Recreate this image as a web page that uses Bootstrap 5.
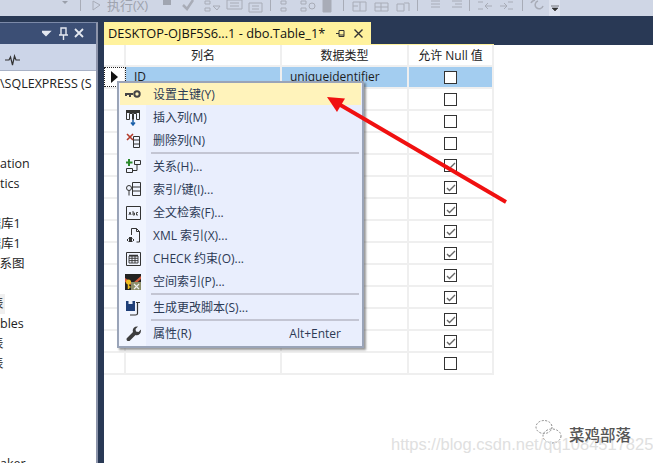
<!DOCTYPE html>
<html lang="zh"><head><meta charset="utf-8">
<link href="https://cdn.jsdelivr.net/npm/bootstrap@5.3.0/dist/css/bootstrap.min.css" rel="stylesheet">
<style>
html,body{margin:0;width:653px;height:463px;overflow:hidden;background:#fff}
body{font-family:"Open Sans","Noto Sans CJK SC",sans-serif;font-size:12px;color:#1e1e1e;position:relative}
.shot{width:653px;height:463px;overflow:hidden}
.tb-bar{height:16px;background:#cfd6e5;position:relative;overflow:hidden}
.tb-bar svg{display:block}
.tb-run{position:absolute;left:107px;top:-4px;font-size:13px;line-height:18px;color:#9ea3ae;white-space:nowrap}
.ide{width:494px;height:447px;background:#293955}
.navy-right{height:29px;background:#293955;width:159px}
.sidepanel{width:98px;height:441px;margin-top:6px;background:#fff;border-right:2px solid #8d95ab;border-top:1px solid #7c8aa8;flex:none}
.side-title{height:22px;background:#3c4f75;color:#dfe4ee}
.side-tools{height:27px;background:#ccd5e8;border-bottom:1px solid #a9b2c6;padding:6px 0 0 5px}
.tree-rows{font-size:12.5px;color:#222;line-height:20px;white-space:nowrap;overflow:hidden;padding-top:3px}
.tree-row{height:20px}
.hover-row{background:#f0f0f0;width:5px;overflow:hidden}
.clip-a{margin-left:-24px}
.clip-b{margin-left:-13px}
.clip-c{margin-left:-9px}
.docarea{width:390px;margin-left:6px}
.tab-row{height:22px;margin-top:6px}
.doc-tab{width:267px;height:22px;background:#fff29d;color:#111;font-size:12.8px;padding-left:4px;line-height:22px}
.tab-tools{margin-left:auto;margin-right:8px;gap:9px}
.tab-line{height:1px;background:#fff29d}
.sheet{background:#fff;height:418px}
.grow-row{height:22px;border-bottom:2px solid #efefef}
.cell-sel{width:22px;border-right:2px solid #efefef;flex:none}
.cell-name{width:156px;border-right:2px solid #efefef;flex:none;padding-left:8px;line-height:20px}
.cell-type{width:127px;border-right:2px solid #efefef;flex:none;padding-left:8px;line-height:20px;overflow:hidden;white-space:nowrap}
.cell-null{width:85px;flex:none;border-right:2px solid #efefef}
.head-row .cell-name,.head-row .cell-type,.head-row .cell-null{text-align:center;padding:0;line-height:22px;color:#222}
.on-row .cell-name,.on-row .cell-type,.on-row .cell-null{background:#a3cdf0}
.on-row .cell-sel{outline:1px dotted #222;outline-offset:-1px;background:#fff}
.cbx{width:13px;height:13px;border:1px solid #333;background:#fff;display:block}
.cell-null svg{display:block}
.popup{position:absolute;left:117px;top:81px;width:247px;height:267px;background:linear-gradient(90deg,#f1f5ff 0,#f1f5ff 27px,#e9eefd 27px);border:2px solid #9aa4b8;box-shadow:2px 2px 2px rgba(70,70,70,.55);padding:0 1px;color:#333}
.pop-item{height:23px;line-height:22px;flex:none}
.pop-item.hot{background:#fff3bb;height:22px}
.pop-item.hot .pop-text{padding-top:1px}
.pop-ico{width:26px;flex:none}
.pop-ico svg{display:block}
.pop-text{margin-left:7px;font-size:12px;color:#2c3a55;white-space:nowrap}
.pop-key{margin-left:auto;margin-right:20px;font-size:12px;color:#2c3a55}
.pop-sep{height:2px;background:#c3c5d3;margin:0 2px 0 31px;flex:none}
.popgap{height:1px;flex:none}
.overlay-svg{position:absolute;left:0;top:0;pointer-events:none}
.mark-a{position:absolute;left:391px;top:435px;font:16.5px "Liberation Sans",sans-serif;color:#e0e0e0;white-space:nowrap}
.mark-b{position:absolute;left:569px;top:424px;font-size:15.5px;color:#555;font-weight:500;white-space:nowrap}
</style></head><body>
<div class="shot">
 <div class="tb-bar">
  <svg width="653" height="16" viewBox="0 0 653 16" fill="none" stroke="#a8acb7">
   <path d="M62 1l3 3 3-3z" fill="#9a9faa" stroke="none"/>
   <path d="M80.500 0v11M93 1l7 4-7 5z"/>
   <path d="M163 0h8v5h-8z" fill="#a0a5b0" stroke="none"/>
   <path d="M183 5l4 4 6-9" stroke-width="2.500"/>
   <path d="M205 1h5v3h-5zM205 8h5v3h-5zM213 6h7l-3 4z"/>
   <path d="M227 0h15v9h-15zM230 3h9M230 6h9"/>
   <path d="M249 3h13v9h-13zM252 6h7M252 9h7"/>
   <path d="M270.500 0v11M281 1h5v3h-5zM281 8h5v3h-5z"/>
   <path d="M301 1h5v3h-5zM301 8h5v3h-5zM309 6a3 3 0 1 0 6 0a3 3 0 1 0-6 0"/>
   <path d="M323 0h8v12h-8z" fill="#a8acb7"/>
   <path d="M343.500 0v11M353 2h13v9h-13zM353 6h5M360 2v9"/>
   <path d="M375 3h13v8h-13zM381 3v8M375 7h13"/>
   <path d="M397 4h7v7h-7zM404 3h5v8"/>
   <path d="M417.500 0v11M431 1h9M431 4h9M431 7h9"/>
   <path d="M452 1h10M455 4h7M452 7h10"/>
   <path d="M469.500 0v11M478 2h5M478 9h5M486 6h6M488 3l-3 3 3 3"/>
   <path d="M500 6h6M504 3l3 3-3 3M508 2h5M508 9h5"/>
   <path d="M522.500 0v11"/>
   <path d="M531 3a6 6 0 0 1 4-3M538 1a4 4 0 1 0 5 5" stroke-width="1.500"/>
   <rect x="549" y="0" width="11" height="16" fill="#dde2ee" stroke="none"/>
   <path d="M551 6h8M552 8h6l-3 3z" fill="#333" stroke="#333" stroke-width=".6"/>
  </svg>
  <span class="tb-run">执行(X)</span>
 </div>
 <div class="d-flex">
  <div class="ide d-flex">
   <div class="sidepanel d-flex flex-column">
    <div class="side-title d-flex align-items-center justify-content-end">
     <svg width="50" height="14" viewBox="0 0 50 14" fill="none" stroke="#e4e8f0" stroke-width="1.400"><path d="M0 4.500h8l-4 4z" fill="#e4e8f0"/><path d="M19 1h5v7h-5zM17 8h9M21.500 8v5M24 2v6"/><path d="M33 2l8 8M41 2l-8 8" stroke-width="1.800"/></svg>
     <span class="ms-1"></span>
    </div>
    <div class="side-tools">
     <svg width="15" height="12" viewBox="0 0 15 12" fill="none" stroke="#333" stroke-width="1.200"><path d="M0 6h4l1.500-3 2 8 2-9 1.500 4h4"/></svg>
    </div>
    <div class="tree-rows">
     <div class="tree-row">\SQLEXPRESS (S</div>
     <div class="tree-row"></div><div class="tree-row"></div><div class="tree-row"></div>
     <div class="tree-row">ation</div>
     <div class="tree-row">tics</div>
     <div class="tree-row"></div>
     <div class="tree-row clip-a">数据库1</div>
     <div class="tree-row clip-a">数据库1</div>
     <div class="tree-row clip-b">关系图</div>
     <div class="tree-row"></div>
     <div class="tree-row hover-row"><span class="clip-c d-block">表</span></div>
     <div class="tree-row">bles</div>
     <div class="tree-row clip-c">表</div>
     <div class="tree-row clip-c">表</div>
     <div class="tree-row"></div><div class="tree-row"></div><div class="tree-row"></div><div class="tree-row"></div>
     <div class="tree-row">aker</div>
    </div>
   </div>
   <div class="docarea d-flex flex-column">
    <div class="tab-row d-flex">
     <div class="doc-tab d-flex align-items-center">
      <span>DESKTOP-OJBF5S6...1 - dbo.Table_1*</span>
      <span class="tab-tools d-flex align-items-center">
       <svg width="9" height="9" viewBox="0 0 9 9" fill="none" stroke="#333"><path d="M0 4.500h3M3 1.500v6h5v-6zM3 6h5"/></svg>
       <svg width="9" height="9" viewBox="0 0 9 9" fill="none" stroke="#333" stroke-width="1.400"><path d="M.5.500l8 8M8.500.500l-8 8"/></svg>
      </span>
     </div>
    </div>
    <div class="tab-line"></div>
    <div class="sheet">
     <div class="grow-row head-row d-flex"><div class="cell-sel"></div><div class="cell-name">列名</div><div class="cell-type">数据类型</div><div class="cell-null">允许 Null 值</div></div>
     <div class="grow-row on-row d-flex"><div class="cell-sel d-flex align-items-center justify-content-center"><svg width="7" height="12" viewBox="0 0 7 12"><path d="M0 0l7 6-7 6z" fill="#111"/></svg></div><div class="cell-name">ID</div><div class="cell-type">uniqueidentifier</div><div class="cell-null d-flex align-items-center justify-content-center"><span class="cbx"></span></div></div>
     <div id="rows"></div>
    </div>
   </div>
  </div>
  <div class="navy-right"></div>
 </div>
</div>
<div class="popup d-flex flex-column">
 <div class="pop-item hot d-flex align-items-center"><span class="pop-ico d-flex justify-content-center"><svg width="16" height="8" viewBox="0 0 16 8"><path d="M0 3h8v2H6v2H4V5H2v1H0z" fill="#444"/><circle cx="12" cy="4" r="2.700" fill="none" stroke="#444" stroke-width="2"/></svg></span><span class="pop-text">设置主键(Y)</span></div>
 <div class="popgap"></div>
 <div class="pop-item d-flex align-items-center"><span class="pop-ico d-flex justify-content-center"><svg width="15" height="16" viewBox="0 0 15 16" fill="none" stroke="#333"><path d="M.5 1.500h13M.5.500h13v9h-3v-6h-3v6h-1v-6h-3v6h-3z"/><path d="M0 0h14v3H0z" fill="#333" stroke="none"/><path d="M7 10v4M5 12.500l2 2.500 2-2.500" stroke="#1a5fa8" stroke-width="1.500"/></svg></span><span class="pop-text">插入列(M)</span></div>
 <div class="pop-item d-flex align-items-center"><span class="pop-ico d-flex justify-content-center"><svg width="15" height="15" viewBox="0 0 15 15" fill="none" stroke="#333"><path d="M7.500 3.500h6v11h-6zM7.500 7h6M7.500 11h6"/><path d="M1 1l6 6M7 1l-6 6" stroke="#b23a2a" stroke-width="1.600"/></svg></span><span class="pop-text">删除列(N)</span></div>
 <div class="pop-sep"></div><div class="popgap"></div>
 <div class="pop-item d-flex align-items-center"><span class="pop-ico d-flex justify-content-center"><svg width="15" height="15" viewBox="0 0 15 15" fill="none" stroke="#333"><path d="M3 0v7M0 3.500h6.500" stroke="#2c8a2c" stroke-width="2"/><path d="M8.500 1.500h6v4h-6zM.5 9.500h6v4h-6zM11 5.500v6h-4.500"/></svg></span><span class="pop-text">关系(H)...</span></div>
 <div class="pop-item d-flex align-items-center"><span class="pop-ico d-flex justify-content-center"><svg width="15" height="15" viewBox="0 0 15 15" fill="none" stroke="#333"><path d="M6.500.500h8v13h-8zM6.500 5h8M6.500 9h8"/><circle cx="3" cy="6" r="2.500" fill="#f1f5ff"/><path d="M3 8.500v5"/></svg></span><span class="pop-text">索引/键(I)...</span></div>
 <div class="pop-item d-flex align-items-center"><span class="pop-ico d-flex justify-content-center"><svg width="15" height="14" viewBox="0 0 15 14" fill="none" stroke="#333"><path d="M.5.500h14v13h-14z"/><path d="M3 9l1-3 1 3M7 5v4h1.500v-2H7M12 6.500h-1.500v2.500H12" stroke-width=".9"/></svg></span><span class="pop-text">全文检索(F)...</span></div>
 <div class="pop-item d-flex align-items-center"><span class="pop-ico d-flex justify-content-center"><svg width="15" height="15" viewBox="0 0 15 15" fill="none" stroke="#333"><path d="M5.500 7V.500h5l3 3v10.500h-3M10.500.500v3h3"/><path d="M1 12l1.500-1.500M1 12l1.500 1.500M8 12l-1.500-1.500M8 12l-1.500 1.500"/><rect x="3.500" y="9.500" width="2" height="4" fill="#333"/></svg></span><span class="pop-text">XML 索引(X)...</span></div>
 <div class="pop-item d-flex align-items-center"><span class="pop-ico d-flex justify-content-center"><svg width="15" height="14" viewBox="0 0 15 14" fill="none" stroke="#333"><path d="M.5.500h14v13h-14z"/><path d="M3 4h9v7H3zM6 4v7M9 4v7M3 6.300h9M3 8.600h9" stroke-width=".9"/><path d="M3 3.500h9" stroke-width="1.500"/></svg></span><span class="pop-text">CHECK 约束(O)...</span></div>
 <div class="pop-item d-flex align-items-center"><span class="pop-ico d-flex justify-content-center"><svg width="16" height="16" viewBox="0 0 16 16"><rect width="16" height="16" fill="#222"/><path d="M0 4l8 5 8-7v3l-8 7-8-4z" fill="#d35a3a"/><path d="M6 8h10v8H6z" fill="#8d8f6a"/><path d="M9 10l5 5M14 10l-5 5" stroke="#eee" stroke-width="1.200"/><circle cx="3.500" cy="8" r="2.500" fill="#f0c020"/><path d="M3.500 10v5M3.500 13h2" stroke="#f0c020" stroke-width="1.500"/></svg></span><span class="pop-text">空间索引(P)...</span></div>
 <div class="pop-sep"></div><div class="popgap"></div>
 <div class="pop-item d-flex align-items-center"><span class="pop-ico d-flex justify-content-center"><svg width="15" height="16" viewBox="0 0 15 16" fill="none" stroke="#333"><path d="M0 1h9v10H0z" fill="#1f3f78" stroke="none"/><path d="M2.500 1h4v3h-4z" fill="#eaf0fb" stroke="none"/><path d="M10 2.500h4M11.500 2.500v11q0 1.500-2 1.500H4" stroke-width="1.200"/></svg></span><span class="pop-text">生成更改脚本(S)...</span></div>
 <div class="pop-sep"></div><div class="popgap"></div>
 <div class="pop-item d-flex align-items-center"><span class="pop-ico d-flex justify-content-center"><svg width="15" height="15" viewBox="0 0 15 15"><path d="M1 12l6-6c-1-3 1-6 5-5.500L9.500 3 10 5.500l2.500.500L15 3.500c.3 4-2.500 6.500-5.500 5.500l-6 6q-1.500 .8-2.500-.5t0-2.500z" fill="#3d3d3d"/></svg></span><span class="pop-text">属性(R)</span><span class="pop-key">Alt+Enter</span></div>
</div>
<svg class="overlay-svg" width="653" height="463" viewBox="0 0 653 463"><path d="M506 202L337 103" stroke="#f01010" stroke-width="3.800" fill="none"/><path d="M327 97l18 1.500-8 13.500z" fill="#f01010"/></svg>
<svg class="overlay-svg" width="653" height="463" viewBox="0 0 653 463" fill="none" stroke="#8a8a8a" stroke-dasharray="2 1.500"><ellipse cx="544" cy="427" rx="8" ry="6.500"/><ellipse cx="552" cy="436" rx="9" ry="7"/></svg>
<div class="mark-a">https://blog.csdn.net/qq1084517825</div>
<div class="mark-b">菜鸡部落</div>
<script>
var c='<path d="M3 7l2.500 2.500L11 4" stroke="#666" stroke-width="1.400" fill="none"/>';
var h='';
for(var i=2;i<=14;i++){var on=i>=5&&i<=13;
h+='<div class="grow-row d-flex"><div class="cell-sel"></div><div class="cell-name"></div><div class="cell-type"></div><div class="cell-null d-flex align-items-center justify-content-center"><svg width="13" height="13" viewBox="0 0 13 13"><rect x=".5" y=".5" width="12" height="12" fill="#fff" stroke="#333"/>'+(on?c:'')+'</svg></div></div>';}
document.getElementById('rows').innerHTML=h;
</script>
<script src="https://cdn.jsdelivr.net/npm/bootstrap@5.3.0/dist/js/bootstrap.bundle.min.js"></script>
</body></html>
